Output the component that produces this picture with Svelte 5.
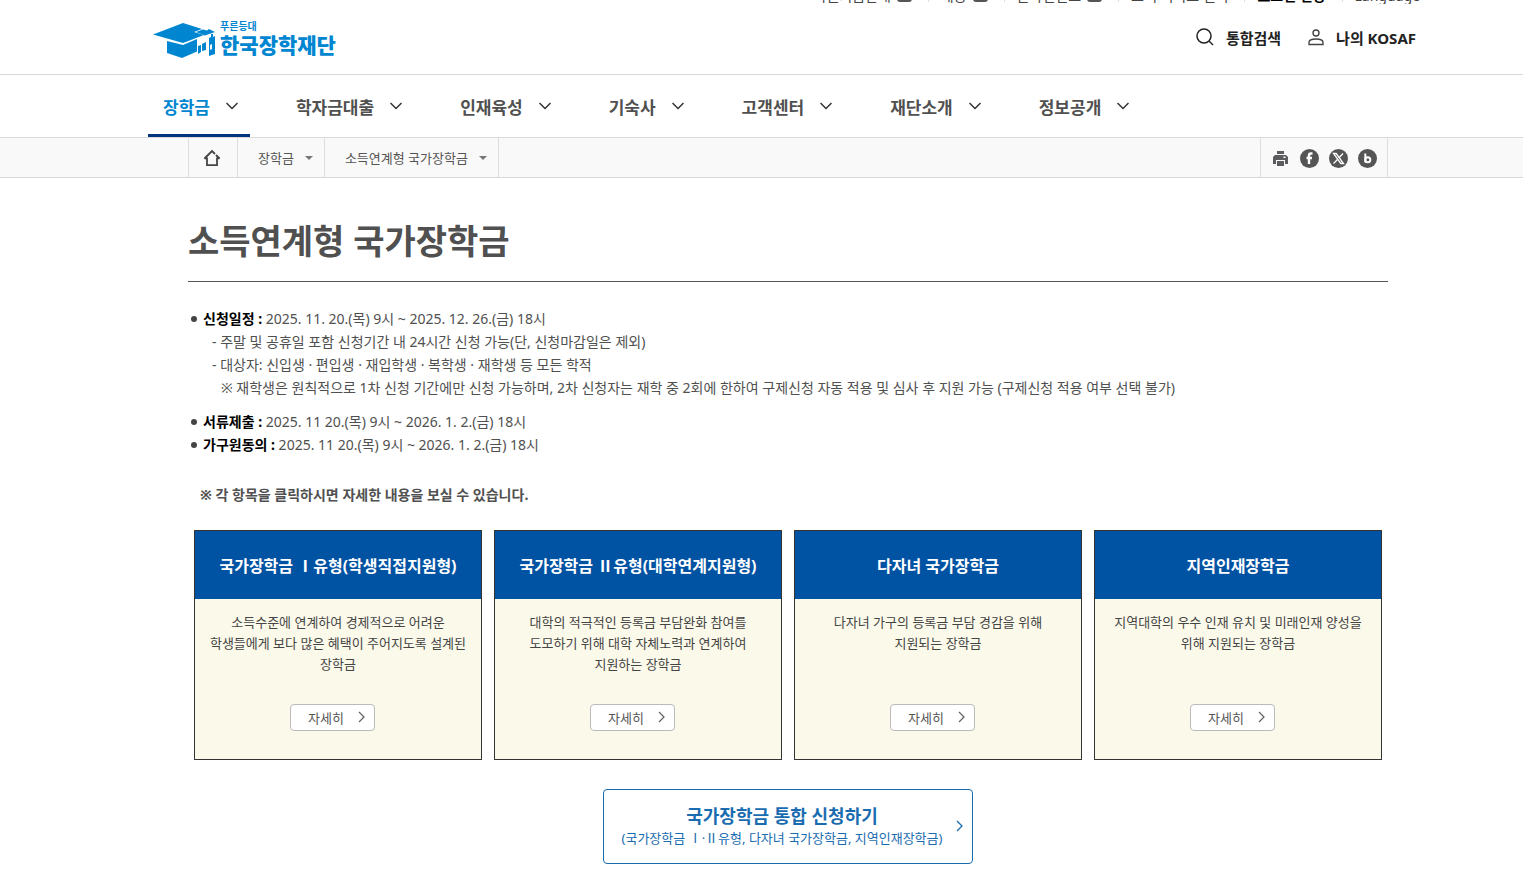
<script lang="ts">
	const topLinks = [
		{ label: '복권기금안내', external: true },
		{ label: '채용', external: true },
		{ label: '온라인신고', external: true },
		{ label: '고객 서비스 센터', external: false }
	];

	const menus = ['장학금', '학자금대출', '인재육성', '기숙사', '고객센터', '재단소개', '정보공개'];
	const current = '장학금';

	const crumbs = ['장학금', '소득연계형 국가장학금'];

	const cards = [
		{
			title: '국가장학금 Ⅰ유형(학생직접지원형)',
			lines: ['소득수준에 연계하여 경제적으로 어려운', '학생들에게 보다 많은 혜택이 주어지도록 설계된', '장학금']
		},
		{
			title: '국가장학금 Ⅱ유형(대학연계지원형)',
			lines: ['대학의 적극적인 등록금 부담완화 참여를', '도모하기 위해 대학 자체노력과 연계하여', '지원하는 장학금']
		},
		{
			title: '다자녀 국가장학금',
			lines: ['다자녀 가구의 등록금 부담 경감을 위해', '지원되는 장학금']
		},
		{
			title: '지역인재장학금',
			lines: ['지역대학의 우수 인재 유치 및 미래인재 양성을', '위해 지원되는 장학금']
		}
	];
</script>

<header>
	<div class="bar">
		<div class="wide">
			<div class="top-links">
				{#each topLinks as link}
					<a href="#top">{link.label}{#if link.external}<i class="ext"></i>{/if}</a>
				{/each}
				<a class="login" href="#login">로그인 연장</a>
				<a href="#lang">Language</a>
			</div>
			<div class="brand-row">
				<a class="logo" href="#home" aria-label="푸른등대 한국장학재단">
					<svg width="64" height="36" viewBox="0 0 64 36" fill="#0086d1">
						<path d="M0 11.500 30 0l19 6-8 3 10 3-21 8z" />
						<path d="m43 9 7-2.500 4 1 2-1.500 6 3-10 3.500z" />
						<path d="M14 18l16 4 14-6v12.500L29 35l-15-5z" />
						<path d="m45 23 3-1v7l-3 2zM49 21l4-2v8l-4 1zM56 15l2-1v-3h2v3l2-1v18l-6 2z" />
						<path d="m57 22 2-1v5l-2 1z" fill="#fff" />
					</svg>
					<span class="logo-text">
						<small>푸른등대</small>
						<strong>한국장학재단</strong>
					</span>
				</a>
				<div class="tools">
					<a href="#search">
						<svg width="18" height="18" viewBox="0 0 18 18" fill="none" stroke="#222" stroke-width="1.500">
							<circle cx="8" cy="8" r="7" />
							<path d="m13 13 4 4" />
						</svg>
						통합검색
					</a>
					<a href="#my">
						<svg width="16" height="17" viewBox="0 0 16 17" fill="none" stroke="#444" stroke-width="1.400">
							<circle cx="8" cy="4" r="3" />
							<path d="M1 15.500v-2C1 11 3.500 10 8 10s7 1 7 3.500v2z" />
						</svg>
						나의 KOSAF
					</a>
				</div>
			</div>
		</div>
	</div>

	<nav class="bar gnb">
		<ul class="wide">
			{#each menus as menu}
				<li>
					<a href="#menu" class:active={menu === current}>
						{menu}
						<svg width="12" height="8" viewBox="0 0 12 8" fill="none" stroke="#333" stroke-width="1.500">
							<path d="m.500 1 5.500 5.500L11.500 1" />
						</svg>
					</a>
				</li>
			{/each}
		</ul>
	</nav>
</header>

<div class="bar location">
	<div class="inner">
		<div class="crumbs">
			<a class="home" href="#home" aria-label="홈">
				<svg width="18" height="18" viewBox="0 0 18 18" fill="none" stroke="#444" stroke-width="1.800">
					<path d="M4 8.500v7.600h10V8.500M1.500 9.500 9 2l3 3M16.500 9.500 13 6" />
					<path d="M1.500 9.300H4M14 9.300h2.500" />
				</svg>
			</a>
			{#each crumbs as crumb}
				<button type="button">{crumb}<i class="caret"></i></button>
			{/each}
		</div>
		<div class="share">
			<button type="button" aria-label="인쇄">
				<svg width="15" height="15" viewBox="0 0 15 15" fill="#5b5b60">
					<path d="M4 0h7v3H4zM2 4h11l2 2v7h-3V9H3v4H0V6z" />
					<path d="M4 10h7v5H4z" />
					<path d="M10.500 5.500h2V7h-2z" fill="#fff" />
				</svg>
			</button>
			<button type="button" aria-label="페이스북">
				<svg width="19" height="19" viewBox="0 0 19 19">
					<circle cx="9.500" cy="9.500" r="9.500" fill="#555" />
					<path d="M12.500 4.500H11Q9 4.500 9 6.500V15M6.500 9h5.500" fill="none" stroke="#fff" stroke-width="2.400" />
				</svg>
			</button>
			<button type="button" aria-label="엑스">
				<svg width="19" height="19" viewBox="0 0 19 19" fill="none" stroke="#fff">
					<circle cx="9.500" cy="9.500" r="9.500" fill="#555" stroke="none" />
					<path d="M4.500 4.500h2.700l7.300 10h-2.700z" stroke-width="1.300" />
					<path d="m14 4.500-4 4.300M8.500 10.500l-4 4" stroke-width="1.300" />
				</svg>
			</button>
			<button type="button" aria-label="블로그">
				<svg width="19" height="19" viewBox="0 0 19 19" fill="none" stroke="#fff" stroke-width="2">
					<circle cx="9.500" cy="9.500" r="9.500" fill="#555" stroke="none" />
					<path d="M7.300 4.500v9" />
					<circle cx="9.800" cy="10.700" r="2.500" />
				</svg>
			</button>
		</div>
	</div>
</div>

<main class="bar">
	<div class="content">
		<h1>소득연계형 국가장학금</h1>

		<ul class="schedule">
			<li>
				<b>신청일정 :</b> 2025. 11. 20.(목) 9시 ~ 2025. 12. 26.(금) 18시
				<p>- 주말 및 공휴일 포함 신청기간 내 24시간 신청 가능(단, 신청마감일은 제외)</p>
				<p>- 대상자: 신입생 · 편입생 · 재입학생 · 복학생 · 재학생 등 모든 학적</p>
				<p class="note">※ 재학생은 원칙적으로 1차 신청 기간에만 신청 가능하며, 2차 신청자는 재학 중 2회에 한하여 구제신청 자동 적용 및 심사 후 지원 가능 (구제신청 적용 여부 선택 불가)</p>
			</li>
			<li><b>서류제출 :</b> 2025. 11 20.(목) 9시 ~ 2026. 1. 2.(금) 18시</li>
			<li><b>가구원동의 :</b> 2025. 11 20.(목) 9시 ~ 2026. 1. 2.(금) 18시</li>
		</ul>

		<p class="guide">※ 각 항목을 클릭하시면 자세한 내용을 보실 수 있습니다.</p>

		<div class="cards">
			{#each cards as card}
				<section class="card">
					<h2>{card.title}</h2>
					<p>
						{#each card.lines as line}
							<span>{line}</span>
						{/each}
					</p>
					<a class="more" href="#detail">
						자세히
						<svg width="7" height="12" viewBox="0 0 7 12" fill="none" stroke="#666" stroke-width="1.300">
							<path d="m1 1 5 5-5 5" />
						</svg>
					</a>
				</section>
			{/each}
		</div>

		<a class="apply" href="#apply">
			<span class="apply-text">
				<strong>국가장학금 통합 신청하기</strong>
				<span>(국가장학금 Ⅰ·Ⅱ유형, 다자녀 국가장학금, 지역인재장학금)</span>
			</span>
			<svg width="7" height="12" viewBox="0 0 7 12" fill="none" stroke="#1a6cb0" stroke-width="1.300">
				<path d="m1 1 5 5-5 5" />
			</svg>
		</a>
	</div>
</main>

<style>
	:global(body) {
		margin: 0;
		font-family: 'Noto Sans', 'Noto Sans CJK KR', sans-serif;
		font-size: 13px;
		color: #444;
		background: #fff;
	}

	:global(*) {
		box-sizing: border-box;
	}

	a {
		color: inherit;
		text-decoration: none;
	}

	button {
		font: inherit;
		color: inherit;
		background: none;
		border: 0;
		padding: 0;
		cursor: pointer;
	}

	ul,
	p,
	h1,
	h2 {
		margin: 0;
		padding: 0;
	}

	ul {
		list-style: none;
	}

	svg {
		flex: none;
	}

	.bar {
		padding-left: 53px;
	}

	.wide {
		max-width: 1280px;
		margin: 0 auto;
	}

	.inner,
	.content {
		max-width: 1200px;
		margin: 0 auto;
	}

	header > .bar {
		border-bottom: 1px solid #d9d9d9;
	}

	/* only the lower edge of the utility links stays in view */
	.top-links {
		display: flex;
		justify-content: flex-end;
		align-items: flex-end;
		height: 4px;
		overflow: hidden;
		font-size: 14px;
		line-height: 16px;
		padding-right: 8px;
	}

	.top-links a {
		display: flex;
		align-items: center;
		gap: 6px;
		white-space: nowrap;
	}

	.top-links a + a::before {
		content: '';
		width: 1px;
		height: 12px;
		margin: 0 6px 0 16px;
		background: #ddd;
	}

	.top-links .login {
		font-weight: 700;
		color: #000;
	}

	.ext {
		width: 15px;
		height: 12px;
		border-radius: 3px;
		background: #555;
	}

	.brand-row {
		display: flex;
		justify-content: space-between;
		height: 70px;
		padding: 15px 12px 0 5px;
	}

	.logo {
		display: flex;
		align-items: flex-start;
		gap: 3px;
		color: #0086d1;
	}

	.logo svg {
		margin-top: 4px;
	}

	.logo-text {
		display: flex;
		flex-direction: column;
	}

	.logo-text small {
		font-size: 10px;
		font-weight: 700;
		line-height: 14px;
	}

	.logo-text strong {
		font-size: 21px;
		font-weight: 900;
		line-height: 24px;
	}

	.tools {
		display: flex;
		gap: 27px;
		height: 36px;
		font-size: 15px;
		font-weight: 700;
		color: #222;
	}

	.tools a {
		display: flex;
		align-items: center;
		gap: 12px;
	}

	.gnb ul {
		display: flex;
		gap: 31px;
	}

	.gnb a {
		display: flex;
		align-items: center;
		gap: 16px;
		height: 62px;
		padding: 3px 12px 0 15px;
		border-bottom: 3px solid transparent;
		color: #505050;
		font-size: 17px;
		font-weight: 700;
		white-space: nowrap;
	}

	.gnb a.active {
		color: #0086d1;
		border-color: #00347c;
	}

	.location {
		background: #f9f9f9;
		border-bottom: 1px solid #d9d9d9;
	}

	.inner {
		display: flex;
		justify-content: space-between;
		height: 39px;
	}

	.crumbs {
		display: flex;
		border-left: 1px solid #ddd;
		color: #555;
	}

	.crumbs > * {
		display: flex;
		align-items: center;
		border-right: 1px solid #ddd;
	}

	.home {
		padding: 0 16px 0 14px;
	}

	.crumbs button {
		gap: 11px;
		padding: 0 11px 0 20px;
	}

	.caret {
		border: 4px solid transparent;
		border-top-color: #777;
		border-bottom: 0;
	}

	.share {
		display: flex;
		align-items: center;
		gap: 10px;
		padding: 2px 10px 0;
		border: solid #ddd;
		border-width: 0 1px;
	}

	.share button {
		display: flex;
		justify-content: center;
		width: 19px;
	}

	h1 {
		padding: 37px 0 14px;
		border-bottom: 1px solid #555;
		font-size: 34px;
		line-height: 52px;
		font-weight: 700;
		color: #505050;
	}

	.schedule {
		padding-top: 25px;
		font-size: 14px;
		line-height: 23px;
		color: #505050;
	}

	.schedule li {
		position: relative;
		padding-left: 15px;
	}

	.schedule li::before {
		content: '';
		position: absolute;
		left: 3px;
		top: 9px;
		width: 6px;
		height: 6px;
		border-radius: 50%;
		background: #444;
	}

	.schedule li:first-child {
		margin-bottom: 11px;
	}

	.schedule b {
		color: #000;
	}

	.schedule p {
		padding-left: 9px;
	}

	.schedule .note {
		padding-left: 18px;
	}

	.guide {
		padding: 27px 0 24px 12px;
		font-size: 14px;
		line-height: 23px;
		font-weight: 700;
		color: #505050;
	}

	.cards {
		display: grid;
		grid-template-columns: repeat(4, 1fr);
		gap: 12px;
		padding: 0 6px;
	}

	.card {
		display: flex;
		flex-direction: column;
		align-items: center;
		min-height: 230px;
		padding-bottom: 28px;
		border: 1px solid #333;
		background: #fbf9ea;
	}

	h2 {
		align-self: stretch;
		padding: 23px 0 21px;
		background: #0052a2;
		color: #fff;
		font-size: 16px;
		line-height: 24px;
		font-weight: 700;
		text-align: center;
		white-space: nowrap;
	}

	.card p {
		display: flex;
		flex-direction: column;
		padding-top: 13px;
		line-height: 21px;
		text-align: center;
		white-space: nowrap;
	}

	.more {
		display: flex;
		align-items: center;
		gap: 14px;
		height: 27px;
		margin: auto 11px 0 0;
		padding: 0 9px 1px 17px;
		border: 1px solid #bbb;
		border-radius: 4px;
		background: #fff;
		color: #555;
	}

	.apply {
		display: flex;
		align-items: center;
		gap: 14px;
		width: fit-content;
		height: 75px;
		margin: 29px auto 16px;
		padding: 0 9px 2px 18px;
		border: 1px solid #1a6cb0;
		border-radius: 4px;
		color: #1a6cb0;
		text-align: center;
	}

	.apply-text {
		display: flex;
		flex-direction: column;
		line-height: 20px;
	}

	.apply strong {
		font-size: 18px;
		line-height: 24px;
		font-weight: 700;
	}
</style>
